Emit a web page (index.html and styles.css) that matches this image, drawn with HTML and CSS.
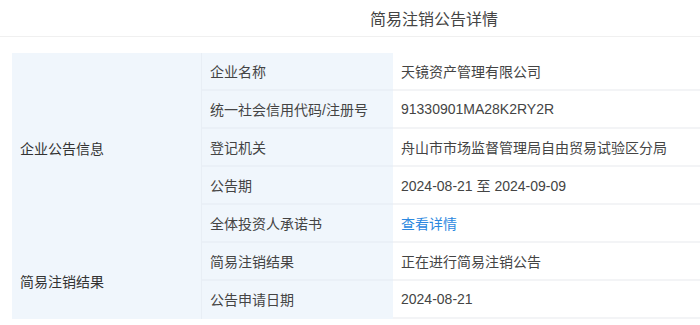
FILE: index.html
```html
<!DOCTYPE html>
<html lang="zh">
<head>
<meta charset="utf-8">
<link rel="stylesheet" href="styles.css">
</head>
<body>
<div class="header"><span class="title">简易注销公告详情</span></div>
<div class="table">
  <div class="group g1">企业公告信息</div>
  <div class="label">企业名称</div><div class="value">天镜资产管理有限公司</div>
  <div class="label">统一社会信用代码/注册号</div><div class="value">91330901MA28K2RY2R</div>
  <div class="label">登记机关</div><div class="value">舟山市市场监督管理局自由贸易试验区分局</div>
  <div class="label">公告期</div><div class="value">2024-08-21 至 2024-09-09</div>
  <div class="label">全体投资人承诺书</div><div class="value"><a class="link">查看详情</a></div>
  <div class="group g2">简易注销结果</div>
  <div class="label">简易注销结果</div><div class="value">正在进行简易注销公告</div>
  <div class="label last">公告申请日期</div><div class="value last">2024-08-21</div>
</div>
</body>
</html>
```
FILE: styles.css
```css
html, body {
  margin: 0;
  padding: 0;
  background: #ffffff;
  font-family: "Liberation Sans", "Noto Sans CJK SC", sans-serif;
  color: #333;
}
.header {
  height: 36px;
  border-bottom: 1px solid #f0f0f0;
  display: flex;
  align-items: center;
  padding-left: 370px;
}
.title {
  font-size: 16px;
  color: #444;
}
.table {
  margin: 16px 0 0 12px;
  display: grid;
  grid-template-columns: 190px 191px 1fr;
  grid-auto-rows: 38px;
  font-size: 14px;
}
.group {
  background: #f0f6fc;
  display: flex;
  align-items: center;
  padding-left: 8px;
  border-right: 1px solid #e8eef5;
  grid-column: 1;
}
.g1 { grid-row: 1 / span 5; }
.g2 { grid-row: 6 / span 2; }
.label, .value {
  display: flex;
  align-items: center;
  padding-left: 8px;
  border-bottom: 2px solid #f3f4f6;
  color: #444;
}
.label {
  background: #f0f6fc;
  border-bottom-color: #eaf0f7;
}
.value {
  background: #ffffff;
}
.last { border-bottom-color: transparent; }
.value.last { border-bottom-color: #f3f4f6; }
.link {
  color: #2b88e0;
  cursor: pointer;
}
```
